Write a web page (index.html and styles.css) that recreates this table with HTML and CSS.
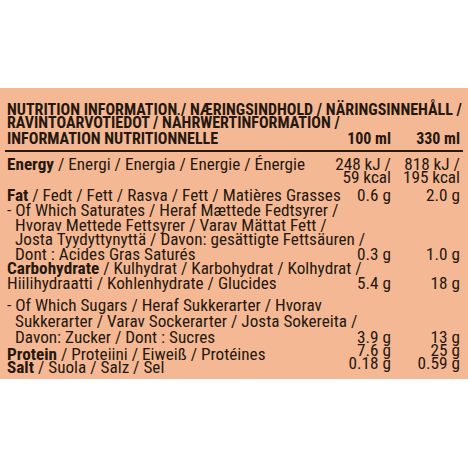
FILE: index.html
```html
<!DOCTYPE html>
<html lang="en">
<head>
    <meta charset="UTF-8">
    <meta name="viewport" content="width=device-width, initial-scale=1.0">
    <title>Nutrition Information</title>
    <link rel="stylesheet" href="styles.css">
</head>
<body>
    <section class="panel">
        <div class="head">
            <div class="head-title">NUTRITION INFORMATION / NÆRINGSINDHOLD / NÄRINGSINNEHÅLL /<br>RAVINTOARVOTIEDOT / NÄHRWERTINFORMATION /</div>
            <div class="row head-row">
                <div class="label">INFORMATION NUTRITIONNELLE</div>
                <div class="val">100 ml</div>
                <div class="val">330 ml</div>
            </div>
        </div>

        <div class="rule"></div>

        <div class="row row-energy">
            <div class="label"><b>Energy</b> / Energi / Energia / Energie / Énergie</div>
            <div class="val">248 kJ /<br>59 kcal</div>
            <div class="val">818 kJ /<br>195 kcal</div>
        </div>

        <div class="row row-fat">
            <div class="label"><b>Fat</b> / Fedt / Fett / Rasva / Fett / Matières Grasses</div>
            <div class="val">0.6 g</div>
            <div class="val">2.0 g</div>
        </div>

        <div class="row row-sub">
            <div class="label sub">- Of Which Saturates / Heraf Mættede Fedtsyrer /<br>Hvorav Mettede Fettsyrer / Varav Mättat Fett /<br>Josta Tyydyttynyttä / Davon: gesättigte Fettsäuren /<br>Dont : Acides Gras Saturés</div>
            <div class="val">0.3 g</div>
            <div class="val">1.0 g</div>
        </div>

        <div class="row row-carb">
            <div class="label"><b>Carbohydrate</b> / Kulhydrat / Karbohydrat / Kolhydrat /<br>Hiilihydraatti / Kohlenhydrate / Glucides</div>
            <div class="val">5.4 g</div>
            <div class="val">18 g</div>
        </div>

        <div class="row row-sugar">
            <div class="label sub">- Of Which Sugars / Heraf Sukkerarter / Hvorav<br>Sukkerarter / Varav Sockerarter / Josta Sokereita /<br>Davon: Zucker / Dont : Sucres</div>
            <div class="val">3.9 g</div>
            <div class="val">13 g</div>
        </div>

        <div class="row row-protein">
            <div class="label"><b>Protein</b> / Proteiini / Eiweiß / Protéines</div>
            <div class="val">7.6 g</div>
            <div class="val">25 g</div>
        </div>

        <div class="row row-salt">
            <div class="label"><b>Salt</b> / Suola / Salz / Sel</div>
            <div class="val">0.18 g</div>
            <div class="val">0.59 g</div>
        </div>
    </section>
</body>
</html>
```

FILE: styles.css
```css
body {
    margin: 0;
    background: #fff;
}

.panel {
    margin-top: 88px;
    height: 291px;
    box-sizing: border-box;
    padding: 15px 8px 0 7px;
    background: #f4b994;
    color: #26170f;
    font-family: "Roboto Condensed", Roboto, sans-serif;
    font-stretch: condensed;
    font-size: 17.2px;
    line-height: 14.5px;
    white-space: nowrap;
}

/* 見出し */
.head {
    font-size: 16px;
    font-weight: bold;
    line-height: 13px;
}

.head-row {
    margin-top: 3px;
}

.rule {
    height: 2px;
    margin: 5px -3px 6px -2px;
    background: #2a1a12;
}

.row {
    display: grid;
    grid-template-columns: minmax(0, 1fr) 62px 69px;
    align-items: end;
}

.val {
    text-align: right;
}

.label b {
    font-weight: bold;
}

.sub {
    padding-left: 8px;
    text-indent: -8px;
}

.row-energy {
    line-height: 13px;
    align-items: start;
}

.row-fat { margin-top: 4px; }
.row-sub { margin-top: 0.5px; }

.row-sugar {
    margin-top: 7px;
    line-height: 16px;
}

.row-protein,
.row-salt {
    line-height: 12.5px;
}

.row-protein { margin-top: 3px; }

.row-protein .val,
.row-salt .val {
    align-self: start;
    margin-top: -4px;
}
```
